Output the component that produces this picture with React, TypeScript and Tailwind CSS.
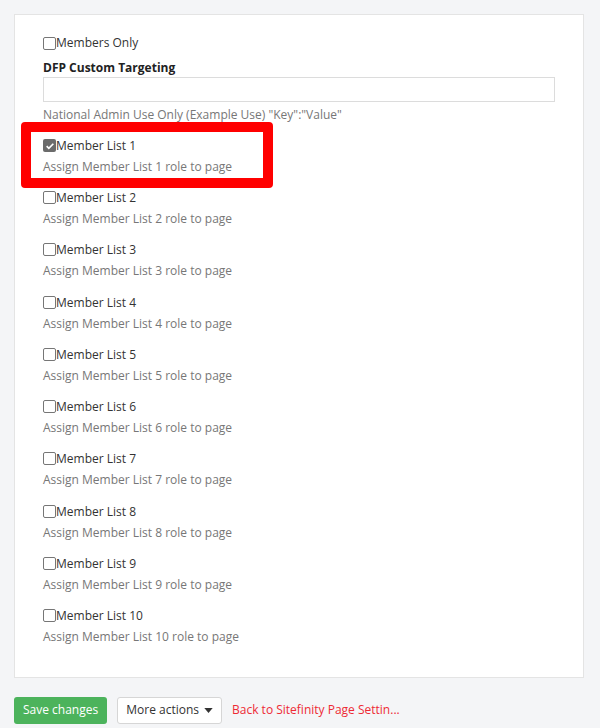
const items = Array.from({ length: 10 }, (_, i) => i + 1)

function Box({ checked = false }: { checked?: boolean }) {
  if (checked) {
    return (
      <span className="inline-flex h-[13px] w-[13px] shrink-0 items-center justify-center rounded-[2px] bg-[#6b6b6b]">
        <svg viewBox="0 0 12 12" className="h-[10px] w-[10px]">
          <path d="M2 6.2l2.6 2.6L10 3.3" fill="none" stroke="#fff" strokeWidth="2" />
        </svg>
      </span>
    )
  }
  return <span className="inline-block h-[13px] w-[13px] shrink-0 rounded-[2px] border border-[#767676] bg-white" />
}

export default function App() {
  return (
    <div
      className="relative h-[728px] w-[600px] overflow-hidden bg-[#f4f5f7] pl-[14px] pr-[16px] pt-[14px] text-[12px] text-[#333]"
      style={{ fontFamily: '"Open Sans", "Liberation Sans", sans-serif' }}
    >
      <div className="border border-[#e4e4e4] bg-white pb-[30px] pl-[28px] pr-[28px] pt-[18px]">
        <label className="flex h-[20px] items-center leading-[20px]">
          <Box />
          <span>Members Only</span>
        </label>
        <div className="mt-[6px] h-[18px] font-bold leading-[18px] text-[#222]">DFP Custom Targeting</div>
        <input type="text" className="block h-[25px] w-full border border-[#dcdcdc] bg-white px-2 outline-none" />
        <div className="mt-[3px] leading-[20px] text-[#777]">National Admin Use Only (Example Use) "Key":"Value"</div>

        <div className="mt-[10px] flex flex-col gap-[10.22px]">
          {items.map((n) => (
            <div key={n}>
              <label className="flex h-[21px] items-center leading-[21px]">
                <Box checked={n === 1} />
                <span>Member List {n}</span>
              </label>
              <div className="leading-[21px] text-[#777]">Assign Member List {n} role to page</div>
            </div>
          ))}
        </div>
      </div>

      <div className="mt-[19px] flex items-center gap-[10px]">
        <button className="h-[27px] rounded-[3px] bg-[#4cb35c] px-[9px] text-white">Save changes</button>
        <button className="flex h-[27px] items-center gap-[5px] rounded-[3px] border border-[#d6d6d6] bg-white px-[8px] text-[#333]">
          More actions
          <svg viewBox="0 0 10 6" className="h-[5px] w-[9px]">
            <path d="M0 0h10L5 6z" fill="#333" />
          </svg>
        </button>
        <a className="text-[#ee2a35]" href="#">Back to Sitefinity Page Settin...</a>
      </div>

      {/* annotation highlight */}
      <div className="pointer-events-none absolute left-[21px] top-[122px] h-[66px] w-[252px] rounded-[4px] border-[10px] border-[#ff0000]" />
    </div>
  )
}
